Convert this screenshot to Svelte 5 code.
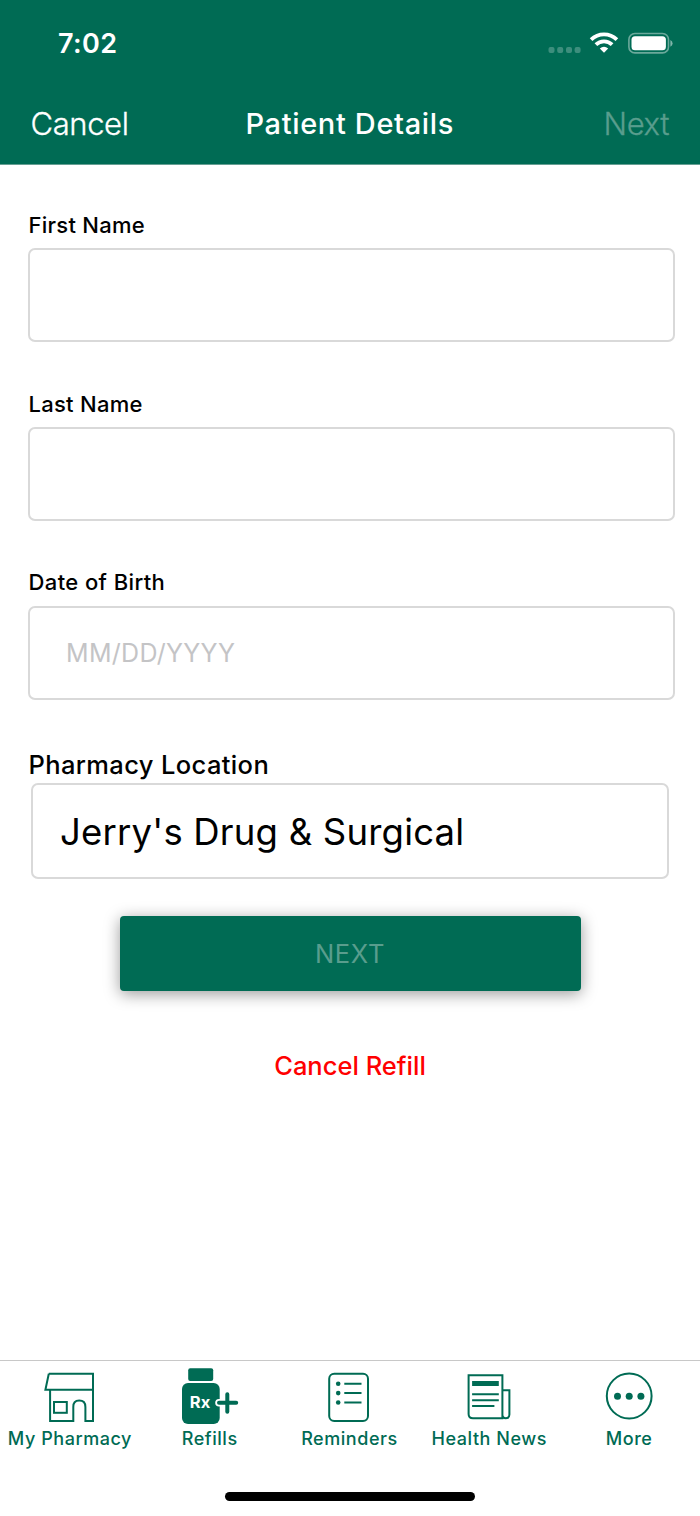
<script>
  const tabs = [
    { id: 'pharmacy', label: 'My Pharmacy' },
    { id: 'refills', label: 'Refills' },
    { id: 'reminders', label: 'Reminders' },
    { id: 'news', label: 'Health News' },
    { id: 'more', label: 'More' }
  ];
  const fields = [
    { id: 'first', label: 'First Name', placeholder: '' },
    { id: 'last', label: 'Last Name', placeholder: '' },
    { id: 'dob', label: 'Date of Birth', placeholder: 'MM/DD/YYYY' }
  ];
</script>

<div class="screen">
  <header>
    <div class="status">
      <time>7:02</time>
      <svg class="indicators" width="126" height="28" viewBox="0 0 126 28">
        <g fill="#fff" opacity=".24">
          <rect x="2.5" y="17" width="6" height="6" rx="2" /><rect x="11.2" y="17" width="6" height="6" rx="2" />
          <rect x="20" y="17" width="6" height="6" rx="2" /><rect x="28.6" y="17" width="6" height="6" rx="2" />
        </g>
        <g fill="none" stroke="#fff" stroke-width="3.8">
          <path d="M45.1 9.6 A18.6 18.6 0 0 1 70.9 9.6" />
          <path d="M49.9 14.6 A11.6 11.6 0 0 1 66.1 14.6" />
        </g>
        <path d="M53.8 18.4 Q58 15 62.2 18.4 L58 22.8Z" fill="#fff" />
        <rect x="82.9" y="3.5" width="39.6" height="19.4" rx="6" fill="none" stroke="#fff" stroke-opacity=".42" stroke-width="1.6" />
        <rect x="85.5" y="6.2" width="34.4" height="14.1" rx="3.5" fill="#fff" />
        <path d="M124.4 10 Q126.6 11.4 126.6 13.4 T124.4 16.8Z" fill="#fff" opacity=".5" />
      </svg>
    </div>
    <nav class="titlebar">
      <span class="cancel">Cancel</span><h1>Patient Details</h1><span class="next">Next</span>
    </nav>
  </header>

  <main>
    {#each fields as f}
      <div class="field">
        <label for={f.id}>{f.label}</label>
        <input id={f.id} placeholder={f.placeholder} />
      </div>
    {/each}
    <div class="location">
      <span class="label">Pharmacy Location</span>
      <div class="select">Jerry's Drug &amp; Surgical</div>
    </div>
    <div class="actions">
      <button class="submit" disabled>NEXT</button>
      <span class="cancel-refill">Cancel Refill</span>
    </div>
  </main>

  <footer>
    <div class="tabs">
      {#each tabs as t}
        <div class="tab">
          <svg width="64" height="64" viewBox="0 0 64 64" fill="none" stroke="#006b54" stroke-width="2">
            {#if t.id === 'pharmacy'}
              <path d="M10.8 12.7H55V60.1H47.4V46Q47.4 39.6 41.2 39.6T35.3 46V60.1H12.1V28.8H55M10.8 12.7L7.4 28.8H12" />
              <rect x="16" y="41" width="12.8" height="10.8" />
            {:else if t.id === 'refills'}
              <g fill="#006b54" stroke="none">
                <rect x="10.2" y="7.2" width="25" height="12.8" rx="2" />
                <rect x="4" y="22" width="37.7" height="41" rx="6" />
              </g>
              <path d="M41 41.8H58M49.3 33.2V50.7" stroke="#fff" stroke-width="7.6" stroke-linecap="round" />
              <path d="M41 41.8H58.2M49.3 33.2V50.7" stroke-width="4" stroke-linecap="round" />
              <text class="rx" x="11.8" y="47.3">Rx</text>
            {:else if t.id === 'reminders'}
              <rect x="12.2" y="12.7" width="38.8" height="47.4" rx="5" />
              <path d="M27.3 22.7H44.5M27.3 32.1H44.5M27.3 41.5H44.5" />
              <g fill="#006b54" stroke="none"><circle cx="21.2" cy="22.7" r="2.3" /><circle cx="21.2" cy="32.1" r="2.3" /><circle cx="21.2" cy="41.5" r="2.3" /></g>
            {:else if t.id === 'news'}
              <path d="M11.6 14.2H45.4V57.3H16Q11.6 57.3 11.6 53ZM45.4 29.2H52.4V53.5Q52.4 57.3 48.8 57.3Q45.4 57.3 45.4 53.5" />
              <path d="M15.1 22.5H41.8" stroke-width="5" />
              <path d="M15.1 33.2H41.8M15.1 39.2H41.8M15.1 45H37.4" />
            {:else}
              <circle cx="32.2" cy="35" r="22.4" />
              <g fill="#006b54" stroke="none"><circle cx="20.5" cy="35.2" r="3.5" /><circle cx="32.2" cy="35.2" r="3.5" /><circle cx="43.9" cy="35.2" r="3.5" /></g>
            {/if}
          </svg>
          <span>{t.label}</span>
        </div>
      {/each}
    </div>
    <div class="home"></div>
  </footer>
</div>

<style>
  :global(body) { margin: 0; background: #fff; }
  .screen { width: 700px; height: 1516px; display: flex; flex-direction: column; font-family: Inter, sans-serif; color: #000; }
  header { box-sizing: border-box; height: 165px; background: #006b54; color: #fff; border-bottom: 1px solid #669f93; }
  .status { display: flex; justify-content: space-between; padding: 30px 28px 0 58px; }
  .indicators { overflow: visible; }
  time { font-size: 27px; font-weight: 600; line-height: 28px; letter-spacing: .4px; }
  .titlebar { display: grid; grid-template-columns: 1fr auto 1fr; align-items: center; padding: 43px 31px 0 30.5px; line-height: 44px; }
  h1 { margin: 1px 0 0; font-size: 29px; font-weight: 500; letter-spacing: .65px; }
  .cancel, .next { font-size: 31px; font-weight: 300; letter-spacing: -.4px; -webkit-text-stroke: .3px currentColor; }
  .next { color: #599d8d; text-align: right; }
  main { flex: 1; display: flex; flex-direction: column; padding: 46px 25px 0 28px; }
  .field { display: flex; flex-direction: column; height: 178.6px; }
  label { font-size: 22px; font-weight: 500; line-height: 28px; margin-bottom: 9.4px; padding-left: .5px; letter-spacing: .27px; }
  .field:nth-child(3) label { letter-spacing: .4px; }
  input { box-sizing: border-box; height: 94px; border: 2px solid #d9d9d9; border-radius: 7px; padding: 1px 36px 0; font: 400 25px Inter, sans-serif; letter-spacing: .3px; }
  input::placeholder { color: #c4c4c6; opacity: 1; }
  .label { padding-left: .5px; font-size: 25.5px; font-weight: 500; line-height: 36px; letter-spacing: .37px; }
  .select { box-sizing: border-box; width: 638px; height: 96px; margin-left: 3px; border: 2px solid #d9d9d9; border-radius: 7px; padding-left: 27px; font-size: 36.5px; line-height: 95px; letter-spacing: .2px; }
  .actions { width: 644px; display: flex; flex-direction: column; align-items: center; }
  .submit { width: 461px; height: 75px; margin-top: 37px; border: 0; border-radius: 4px; background: #006b54; color: #599d8d; font: 400 25.5px Inter, sans-serif; letter-spacing: .7px; box-shadow: 0 3px 16px rgba(0, 0, 0, .4); }
  .cancel-refill { margin-top: 57px; font-size: 25.5px; font-weight: 500; line-height: 36px; letter-spacing: 0; color: #f00; }
  footer { height: 156px; box-sizing: border-box; border-top: 1px solid #c8c8c8; }
  .tabs { display: grid; grid-template-columns: repeat(5, 139.8px); }
  .tab { display: flex; flex-direction: column; align-items: center; font-size: 18px; font-weight: 500; line-height: 28px; letter-spacing: .55px; color: #006b54; }
  .rx { fill: #fff; stroke: none; font-size: 16.5px; font-weight: 700; letter-spacing: 0; }
  .home { width: 250px; height: 9px; border-radius: 5px; background: #000; margin: 39px auto 0; }
</style>
